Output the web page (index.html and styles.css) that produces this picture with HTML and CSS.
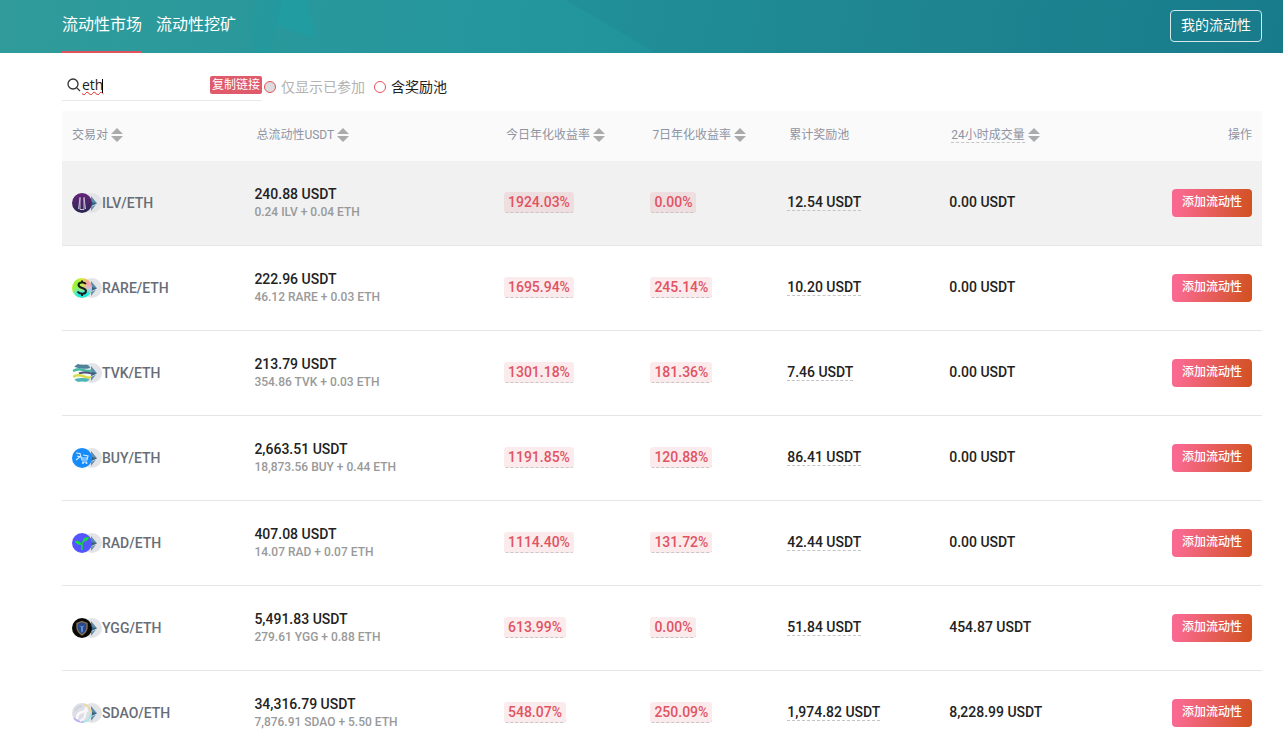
FILE: index.html
```html
<!DOCTYPE html>
<html lang="zh-CN">
<head>
<meta charset="utf-8">
<title>流动性市场</title>
<link rel="stylesheet" href="styles.css">
</head>
<body>
<svg class="defs" aria-hidden="true">
  <symbol id="eth" viewBox="0 0 30 20">
    <circle cx="20" cy="10" r="10" fill="#e2e4e8"/>
    <path d="M19 3L25 10.200L19 13Z" fill="#5d8ba8"/>
    <path d="M19 9L25 10.200L19 13Z" fill="#35607f"/>
    <path d="M19 14L24 11.500L19 18Z" fill="#6590ab"/>
  </symbol>
  <symbol id="sort" viewBox="0 0 12 14">
    <path d="M6 0L12 6H0ZM0 8H12L6 14Z" fill="#aaabad"/>
  </symbol>
</svg>
<header class="top">
  <svg class="top-art" viewBox="0 0 1283 53" preserveAspectRatio="none" aria-hidden="true">
    <path d="M250 22L258 0H282L276 27L270 53H255Z" fill="#169ba3" opacity=".25"/>
    <path d="M282 0H308L315 39L276 25Z" fill="#12a5aa" opacity=".3"/>
    <path d="M566 0H1283V53H656Z" fill="#217781" opacity=".16"/>
  </svg>
  <nav class="tabs">
    <a class="tab active" href="#market">流动性市场</a>
    <a class="tab" href="#mining">流动性挖矿</a>
  </nav>
  <button class="mine" type="button">我的流动性</button>
</header>
<main class="page">
  <form class="filters">
    <div class="search">
      <label for="q" class="search-icon" aria-label="搜索">
        <svg width="14" height="14" viewBox="0 0 14 14" fill="none" stroke="#333" stroke-width="1.300"><circle cx="6" cy="6" r="5"/><path d="M9.600 9.600L13 13"/></svg>
      </label>
      <input id="q" class="query" type="text" value="eth" autocomplete="off">
      <span class="caret"></span>
      <button class="copy" type="button">复制链接</button>
    </div>
    <label class="option off"><input class="dot" type="checkbox" disabled>仅显示已参加</label>
    <label class="option"><input class="dot" type="checkbox">含奖励池</label>
  </form>
  <table class="pools">
    <colgroup><col class="c-pair"><col class="c-total"><col class="c-today"><col class="c-week"><col class="c-reward"><col class="c-volume"><col></colgroup>
    <thead>
      <tr>
        <th>交易对<svg class="sort"><use href="#sort"/></svg></th>
        <th>总流动性USDT<svg class="sort"><use href="#sort"/></svg></th>
        <th>今日年化收益率<svg class="sort"><use href="#sort"/></svg></th>
        <th>7日年化收益率<svg class="sort"><use href="#sort"/></svg></th>
        <th>累计奖励池</th>
        <th><span class="hint">24小时成交量</span><svg class="sort"><use href="#sort"/></svg></th>
        <th class="end">操作</th>
      </tr>
    </thead>
    <tbody>
      <tr class="hovered">
        <td><div class="pair"><svg class="coins" viewBox="0 0 30 20"><use href="#eth"/><defs><linearGradient id="ilv" x2="0" y2="1"><stop stop-color="#66247a"/><stop offset="1" stop-color="#282653"/></linearGradient></defs><circle cx="10" cy="10" r="10" fill="url(#ilv)"/><path d="M8 4V16.500H12V4M8 5L6.500 16M12 5L13.500 16" fill="none" stroke="#c9bcd4"/></svg>ILV/ETH</div></td>
        <td><div class="total">240.88 USDT</div><div class="parts">0.24 ILV + 0.04 ETH</div></td>
        <td><span class="rate">1924.03%</span></td><td><span class="rate">0.00%</span></td>
        <td><span class="hint">12.54 USDT</span></td><td>0.00 USDT</td>
        <td class="end"><button class="add" type="button">添加流动性</button></td>
      </tr>
      <tr>
        <td><div class="pair"><svg class="coins" viewBox="0 0 30 20"><use href="#eth"/><defs><clipPath id="disc"><circle cx="10" cy="10" r="10"/></clipPath><filter id="soft"><feGaussianBlur stdDeviation="2"/></filter></defs><g clip-path="url(#disc)"><path fill="#e8ee22" d="M0 0H20V20H0Z"/><g filter="url(#soft)"><path fill="#93f43c" d="M0 0H8L10 10L0 18Z"/><path fill="#f5a2a5" d="M12 0H22V9L12 10Z"/><path fill="#ecadf0" d="M14 8H22V14H12Z"/><path fill="#19e7ea" d="M2 13L20 11V22H2Z"/></g></g><path d="M14 6C12 3.500 6.500 4 6.500 7C6.500 10.500 14 9.500 14 13C14 16.500 7.500 16.500 5.500 13.500M10 2.500V5M10 15V18" fill="none" stroke="#172016" stroke-width="2"/></svg>RARE/ETH</div></td>
        <td><div class="total">222.96 USDT</div><div class="parts">46.12 RARE + 0.03 ETH</div></td>
        <td><span class="rate">1695.94%</span></td><td><span class="rate">245.14%</span></td>
        <td><span class="hint">10.20 USDT</span></td><td>0.00 USDT</td>
        <td class="end"><button class="add" type="button">添加流动性</button></td>
      </tr>
      <tr>
        <td><div class="pair"><svg class="coins" viewBox="0 0 30 20"><use href="#eth"/><circle cx="10" cy="10" r="9.500" fill="#f5faf7"/><g clip-path="url(#disc)" fill="none"><path d="M3 2Q10 5 18 3" stroke="#4f8199" stroke-width="4"/><path d="M1 8Q6 5 11 7T20 7" stroke="#49b6a5" stroke-width="2.500"/><path d="M7 10.500Q12 8.500 20 10.500" stroke="#50547f" stroke-width="2"/><path d="M1 14Q6 11 12 13.500T20 13.500" stroke="#d7dd48" stroke-width="2.500"/><path d="M3 18Q10 15.500 17 18" stroke="#4cb5b5" stroke-width="3.500"/></g></svg>TVK/ETH</div></td>
        <td><div class="total">213.79 USDT</div><div class="parts">354.86 TVK + 0.03 ETH</div></td>
        <td><span class="rate">1301.18%</span></td><td><span class="rate">181.36%</span></td>
        <td><span class="hint">7.46 USDT</span></td><td>0.00 USDT</td>
        <td class="end"><button class="add" type="button">添加流动性</button></td>
      </tr>
      <tr>
        <td><div class="pair"><svg class="coins" viewBox="0 0 30 20"><use href="#eth"/><circle cx="10" cy="10" r="10" fill="#168bfa"/><path d="M4 5L8 5.500L10 12H15L16 8L11 7M5 8L9 9M4 12L9 8M10 14H15M10 10H15" fill="none" stroke="#d5ecff" stroke-width="1.100"/><circle cx="11" cy="15" r="1" fill="#d5ecff"/><circle cx="14.500" cy="15" r="1" fill="#d5ecff"/></svg>BUY/ETH</div></td>
        <td><div class="total">2,663.51 USDT</div><div class="parts">18,873.56 BUY + 0.44 ETH</div></td>
        <td><span class="rate">1191.85%</span></td><td><span class="rate">120.88%</span></td>
        <td><span class="hint">86.41 USDT</span></td><td>0.00 USDT</td>
        <td class="end"><button class="add" type="button">添加流动性</button></td>
      </tr>
      <tr>
        <td><div class="pair"><svg class="coins" viewBox="0 0 30 20"><use href="#eth"/><circle cx="10" cy="10" r="10" fill="#5555ff"/><path d="M10 17V12Q10 8 14 7" fill="none" stroke="#16d548" stroke-width="1.500"/><path d="M11 8Q11 4 17 4Q16 9 11 8ZM9.500 12Q4 12 3 8Q8 7 9.500 12Z" fill="#13df3b"/></svg>RAD/ETH</div></td>
        <td><div class="total">407.08 USDT</div><div class="parts">14.07 RAD + 0.07 ETH</div></td>
        <td><span class="rate">1114.40%</span></td><td><span class="rate">131.72%</span></td>
        <td><span class="hint">42.44 USDT</span></td><td>0.00 USDT</td>
        <td class="end"><button class="add" type="button">添加流动性</button></td>
      </tr>
      <tr>
        <td><div class="pair"><svg class="coins" viewBox="0 0 30 20"><use href="#eth"/><circle cx="10" cy="10" r="10" fill="#0b0905"/><path d="M10 3.500L15 5.500V10Q14.500 14 10 17Q5.500 14 5 10V5.500Z" fill="#28488a" stroke="#8c7652" stroke-width="1.300"/><path d="M7 7L9 9V13L10 15L11 13V9L13 7L11 8H9Z" fill="#5c8dd8"/></svg>YGG/ETH</div></td>
        <td><div class="total">5,491.83 USDT</div><div class="parts">279.61 YGG + 0.88 ETH</div></td>
        <td><span class="rate">613.99%</span></td><td><span class="rate">0.00%</span></td>
        <td><span class="hint">51.84 USDT</span></td><td>454.87 USDT</td>
        <td class="end"><button class="add" type="button">添加流动性</button></td>
      </tr>
      <tr>
        <td><div class="pair"><svg class="coins" viewBox="0 0 30 20"><use href="#eth"/><circle cx="10" cy="10" r="10" fill="#dedfe5"/><g fill="none" stroke-width="1.800"><path d="M12 1Q19 4 19 10" stroke="#efd99d"/><path d="M19 10Q18 18 11 19" stroke="#a7e6e5"/><path d="M11 19Q5 19 2 15" stroke="#b8b0f1"/><path d="M5 16Q5 10 10 9T14 4" stroke="#fafafa" stroke-width="2.500"/><path d="M8 18Q13 16 13 12T16 7" stroke="#f8f5ff" stroke-width="2"/><path d="M3 8Q5 4 10 3" stroke="#cfd1dc"/></g></svg>SDAO/ETH</div></td>
        <td><div class="total">34,316.79 USDT</div><div class="parts">7,876.91 SDAO + 5.50 ETH</div></td>
        <td><span class="rate">548.07%</span></td><td><span class="rate">250.09%</span></td>
        <td><span class="hint">1,974.82 USDT</span></td><td>8,228.99 USDT</td>
        <td class="end"><button class="add" type="button">添加流动性</button></td>
      </tr>
    </tbody>
  </table>
</main>
</body>
</html>
```
FILE: styles.css
```css
* { box-sizing: border-box; }
html { scrollbar-width: none; }
body {
  margin: 0;
  background: #fff;
  color: #222;
  font-family: Roboto, "Noto Sans CJK SC", sans-serif;
  font-size: 14px;
}
button, input { font: inherit; }
.defs { position: absolute; width: 0; height: 0; }

.top {
  position: relative;
  display: flex;
  justify-content: space-between;
  align-items: flex-start;
  padding: 0 21px 0 62px;
  background: linear-gradient(100deg, #309b9a, #22959d 45%, #1e8994 70%, #177d8d);
}
.top-art { position: absolute; inset: 0; width: 100%; height: 100%; }
.tabs { position: relative; display: flex; gap: 14px; }
.tab {
  height: 53px;
  border-bottom: 2px solid transparent;
  color: #fff;
  font-size: 16px;
  line-height: 50px;
  text-decoration: none;
}
.tab.active { border-color: #e2525c; }
.mine {
  position: relative;
  height: 32px;
  margin-top: 10px;
  padding: 0 10px 2px;
  border: 1px solid #d5e8ea;
  border-radius: 4px;
  background: none;
  color: #fff;
  line-height: 28px;
}

.page { padding: 17px 21px 0 62px; }
.filters { display: flex; gap: 9px; margin-bottom: 10px; }
.search {
  position: relative;
  display: flex;
  align-items: center;
  width: 200px;
  height: 31px;
  margin-right: -7px;
  padding-left: 5px;
  border-bottom: 1px solid #e9e9e9;
}
.search-icon { display: flex; }
.query {
  flex: 1;
  min-width: 0;
  padding: 0 0 0 1px;
  border: 0;
  outline: 0;
  background: none;
  color: #222;
  font-family: "Open Sans", sans-serif;
  line-height: 20px;
  text-decoration: underline wavy #e32727 1px;
}
.caret { position: absolute; left: 40px; top: 9px; width: 1px; height: 14px; background: #000; }
.copy {
  height: 18px;
  padding: 0 2px;
  border: 0;
  border-radius: 2px;
  background: #df5a6a;
  color: #fff;
  font-size: 12px;
  line-height: 16px;
}
.option {
  display: flex;
  align-items: center;
  gap: 5px;
  padding-top: 3px;
  color: #222;
  line-height: 20px;
}
.option.off { color: #b3b3b3; }
.dot {
  appearance: none;
  width: 12px;
  height: 12px;
  margin: 0;
  border: 1px solid #e2525c;
  border-radius: 50%;
  background: #fff;
}
.dot:disabled { background: #dcdcdc; }

.pools { width: 100%; table-layout: fixed; border-collapse: separate; border-spacing: 0; }
.c-pair { width: 15.2%; }
.c-total { width: 20.8%; }
.c-today { width: 12.2%; }
.c-week { width: 11.4%; }
.c-reward { width: 13.5%; }
.c-volume { width: 15%; }
.pools th {
  height: 50px;
  padding: 0 10px 5px 12px;
  background: #fafafa;
  color: #8f94a3;
  font-size: 12px;
  font-weight: 400;
  text-align: left;
  white-space: nowrap;
}
.pools th:first-child { padding-left: 10px; }
.sort { width: 12px; height: 14px; margin-left: 3px; vertical-align: -3px; }
.pools td {
  height: 85px;
  padding: 0 10px 2px;
  border-bottom: 1px solid #e6e6e6;
  font-weight: 500;
  white-space: nowrap;
}
.hovered { background: #f1f1f1; }
.pools .end { text-align: right; }
.pools td:first-child, .pools td.end { padding-bottom: 0; }
.pair { display: flex; align-items: center; color: #676d76; line-height: 20px; }
.coins { width: 30px; height: 20px; }
.total { line-height: 20px; }
.parts { color: #999; font-size: 12px; line-height: 16px; }
.rate {
  display: inline-block;
  padding: 0 4px;
  border-bottom: 1px dashed #c9c4c6;
  border-radius: 3px;
  background: rgba(223, 75, 95, .11);
  color: #e05462;
  line-height: 20px;
}
.hint { border-bottom: 1px dashed #c4c4c4; }
.add {
  height: 28px;
  padding: 0 10px 2px;
  border: 0;
  border-radius: 4px;
  background: linear-gradient(100deg, #f9698f 10%, #d35224 95%);
  color: #fff;
  font-size: 12px;
  line-height: 24px;
}
```
